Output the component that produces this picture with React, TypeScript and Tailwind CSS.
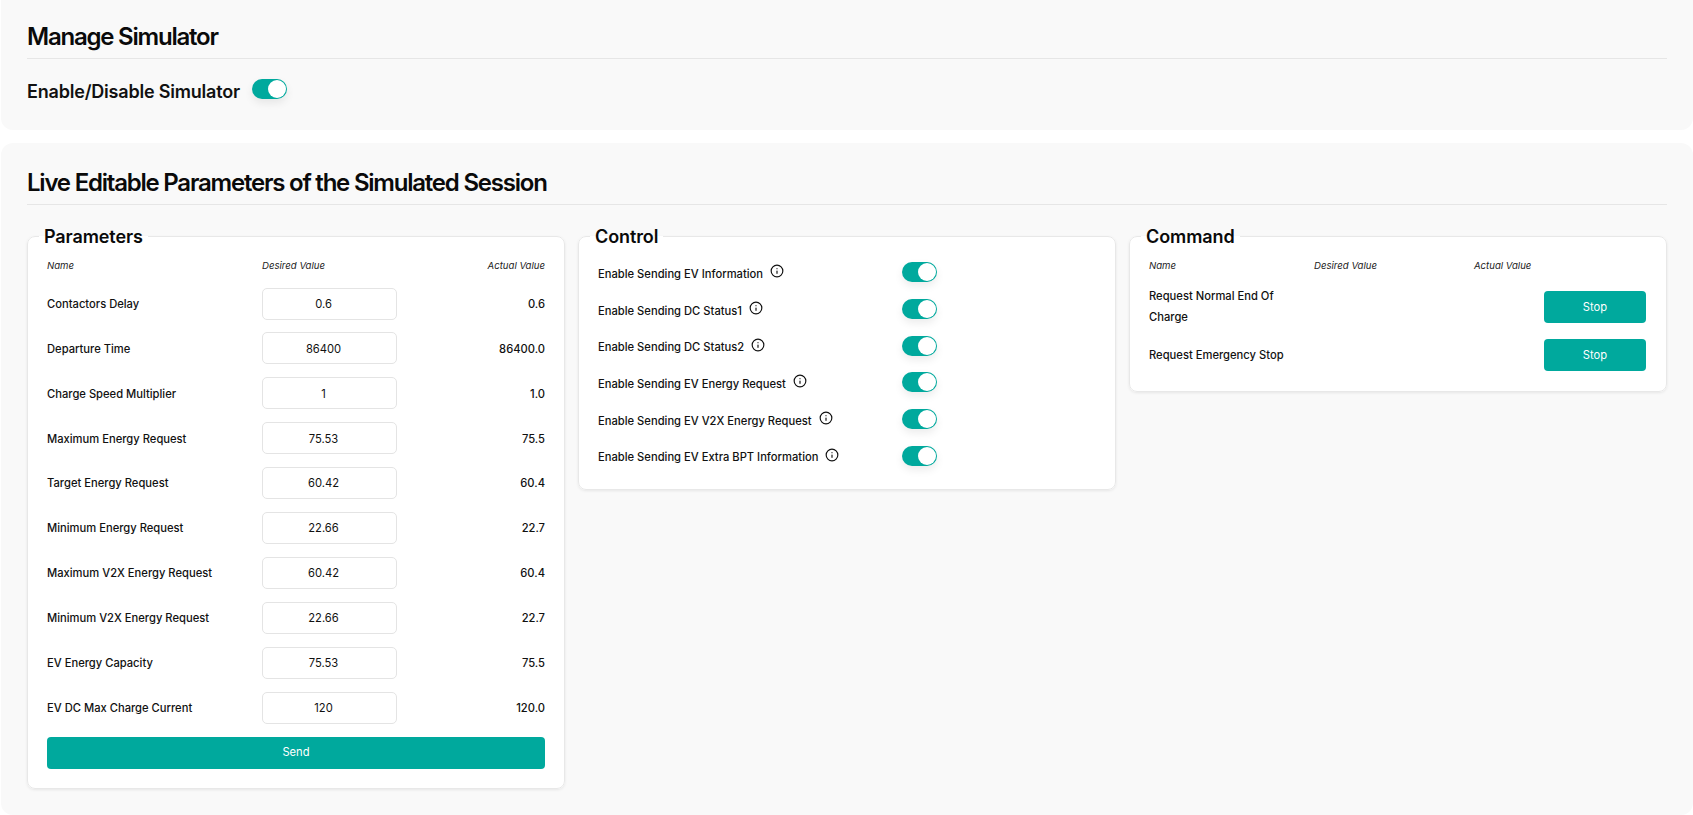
import { Info } from 'lucide-react'

const params = [
  { name: 'Contactors Delay', desired: '0.6', actual: '0.6' },
  { name: 'Departure Time', desired: '86400', actual: '86400.0' },
  { name: 'Charge Speed Multiplier', desired: '1', actual: '1.0' },
  { name: 'Maximum Energy Request', desired: '75.53', actual: '75.5' },
  { name: 'Target Energy Request', desired: '60.42', actual: '60.4' },
  { name: 'Minimum Energy Request', desired: '22.66', actual: '22.7' },
  { name: 'Maximum V2X Energy Request', desired: '60.42', actual: '60.4' },
  { name: 'Minimum V2X Energy Request', desired: '22.66', actual: '22.7' },
  { name: 'EV Energy Capacity', desired: '75.53', actual: '75.5' },
  { name: 'EV DC Max Charge Current', desired: '120', actual: '120.0' },
]

const controls = [
  'Enable Sending EV Information',
  'Enable Sending DC Status1',
  'Enable Sending DC Status2',
  'Enable Sending EV Energy Request',
  'Enable Sending EV V2X Energy Request',
  'Enable Sending EV Extra BPT Information',
]

function Toggle() {
  return (
    <div className="w-[35px] h-5 rounded-full bg-[#00a99d] flex items-center justify-end pr-px shadow-[0_4px_8px_rgba(0,0,0,0.08)] shrink-0">
      <div className="w-[18px] h-[18px] rounded-full bg-white" />
    </div>
  )
}

function Box({ title, className, children }: { title: string; className: string; children: React.ReactNode }) {
  return (
    <fieldset className={`min-w-0 bg-white border border-[#e8e8e8] rounded-lg shadow-[0_1px_3px_rgba(0,0,0,0.08)] ${className}`}>
      <legend className="-ml-2 px-[5px] text-[18px] leading-[22px] font-semibold tracking-[-0.1px] text-[#0a0a0a] translate-y-px">{title}</legend>
      {children}
    </fieldset>
  )
}

function Stop() {
  return (
    <button className="w-[102px] h-8 mr-px pt-px rounded bg-[#00a99d] text-white text-[11.2px]">Stop</button>
  )
}

export default function App() {
  return (
    <div className="min-h-[815px] bg-white font-['Inter','Liberation_Sans',sans-serif] text-[#111] flex flex-col gap-[13px] pl-px">
      {/* Manage simulator */}
      <section className="h-[130px] bg-[#f9f9f9] rounded-b-xl px-[26px] pt-[21px]">
        <h2 className="text-[24px] leading-[32px] font-semibold tracking-[-1.22px] text-[#0a0a0a] pb-[5px] border-b border-[#e6e6e6]">Manage Simulator</h2>
        <div className="flex items-center gap-3 mt-[21px]">
          <span className="text-[18px] leading-6 font-semibold tracking-[-0.2px]">Enable/Disable Simulator</span>
          <div className="-mt-1.5">
            <Toggle />
          </div>
        </div>
      </section>

      {/* Live parameters */}
      <section className="flex-1 bg-[#f9f9f9] rounded-xl px-[26px] pt-[24px]">
        <h2 className="text-[24px] leading-[32px] font-semibold tracking-[-1.22px] text-[#0a0a0a] pb-[5px] border-b border-[#e6e6e6]">Live Editable Parameters of the Simulated Session</h2>
        <div className="grid grid-cols-3 gap-[13px] mt-[20px] items-start">
          <Box title="Parameters" className="px-[19px] pb-[19px]">
            <div className="grid grid-cols-[215px_1fr_auto] text-[9.6px] italic text-[#222] h-[26px] mt-[6px] mb-[8px] items-center">
              <span>Name</span>
              <span>Desired Value</span>
              <span>Actual Value</span>
            </div>
            <div className="flex flex-col gap-[11.98px]">
              {params.map((p) => (
                <div key={p.name} className="grid grid-cols-[215px_1fr_auto] items-center h-[33px] text-[11.2px]">
                  <span className="font-medium mt-px">{p.name}</span>
                  <div className="w-[135px] h-8 bg-white border border-[#e4e4e4] rounded-[5px] flex items-center justify-center pr-3 pt-px">{p.desired}</div>
                  <span className="font-medium mt-px">{p.actual}</span>
                </div>
              ))}
            </div>
            <button className="w-full h-8 mt-3 rounded bg-[#00a99d] text-white text-[11.2px]">Send</button>
          </Box>

          <Box title="Control" className="px-[19px] pb-6">
            <div className="flex flex-col gap-[16.7px] pt-[15px]">
              {controls.map((c) => (
                <div key={c} className="grid grid-cols-[304px_auto] items-center h-5">
                  <div className="flex items-center gap-[7px]">
                    <span className="text-[11.2px] font-medium mt-1">{c}</span>
                    <Info size={14} className="-mt-0.5 text-[#111]" />
                  </div>
                  <Toggle />
                </div>
              ))}
            </div>
          </Box>

          <Box title="Command" className="px-[19px] pb-5">
            <div className="grid grid-cols-[165px_160px_1fr] text-[9.6px] italic text-[#222] h-[26px] mt-[6px] items-center">
              <span>Name</span>
              <span>Desired Value</span>
              <span>Actual Value</span>
            </div>
            <div className="flex items-center justify-between mt-[9px] h-[37px]">
              <span className="w-[140px] text-[11.2px] font-medium leading-[21px]">Request Normal End Of Charge</span>
              <Stop />
            </div>
            <div className="flex items-center justify-between mt-[14px]">
              <span className="text-[11.2px] font-medium mt-px">Request Emergency Stop</span>
              <Stop />
            </div>
          </Box>
        </div>
      </section>
    </div>
  )
}
